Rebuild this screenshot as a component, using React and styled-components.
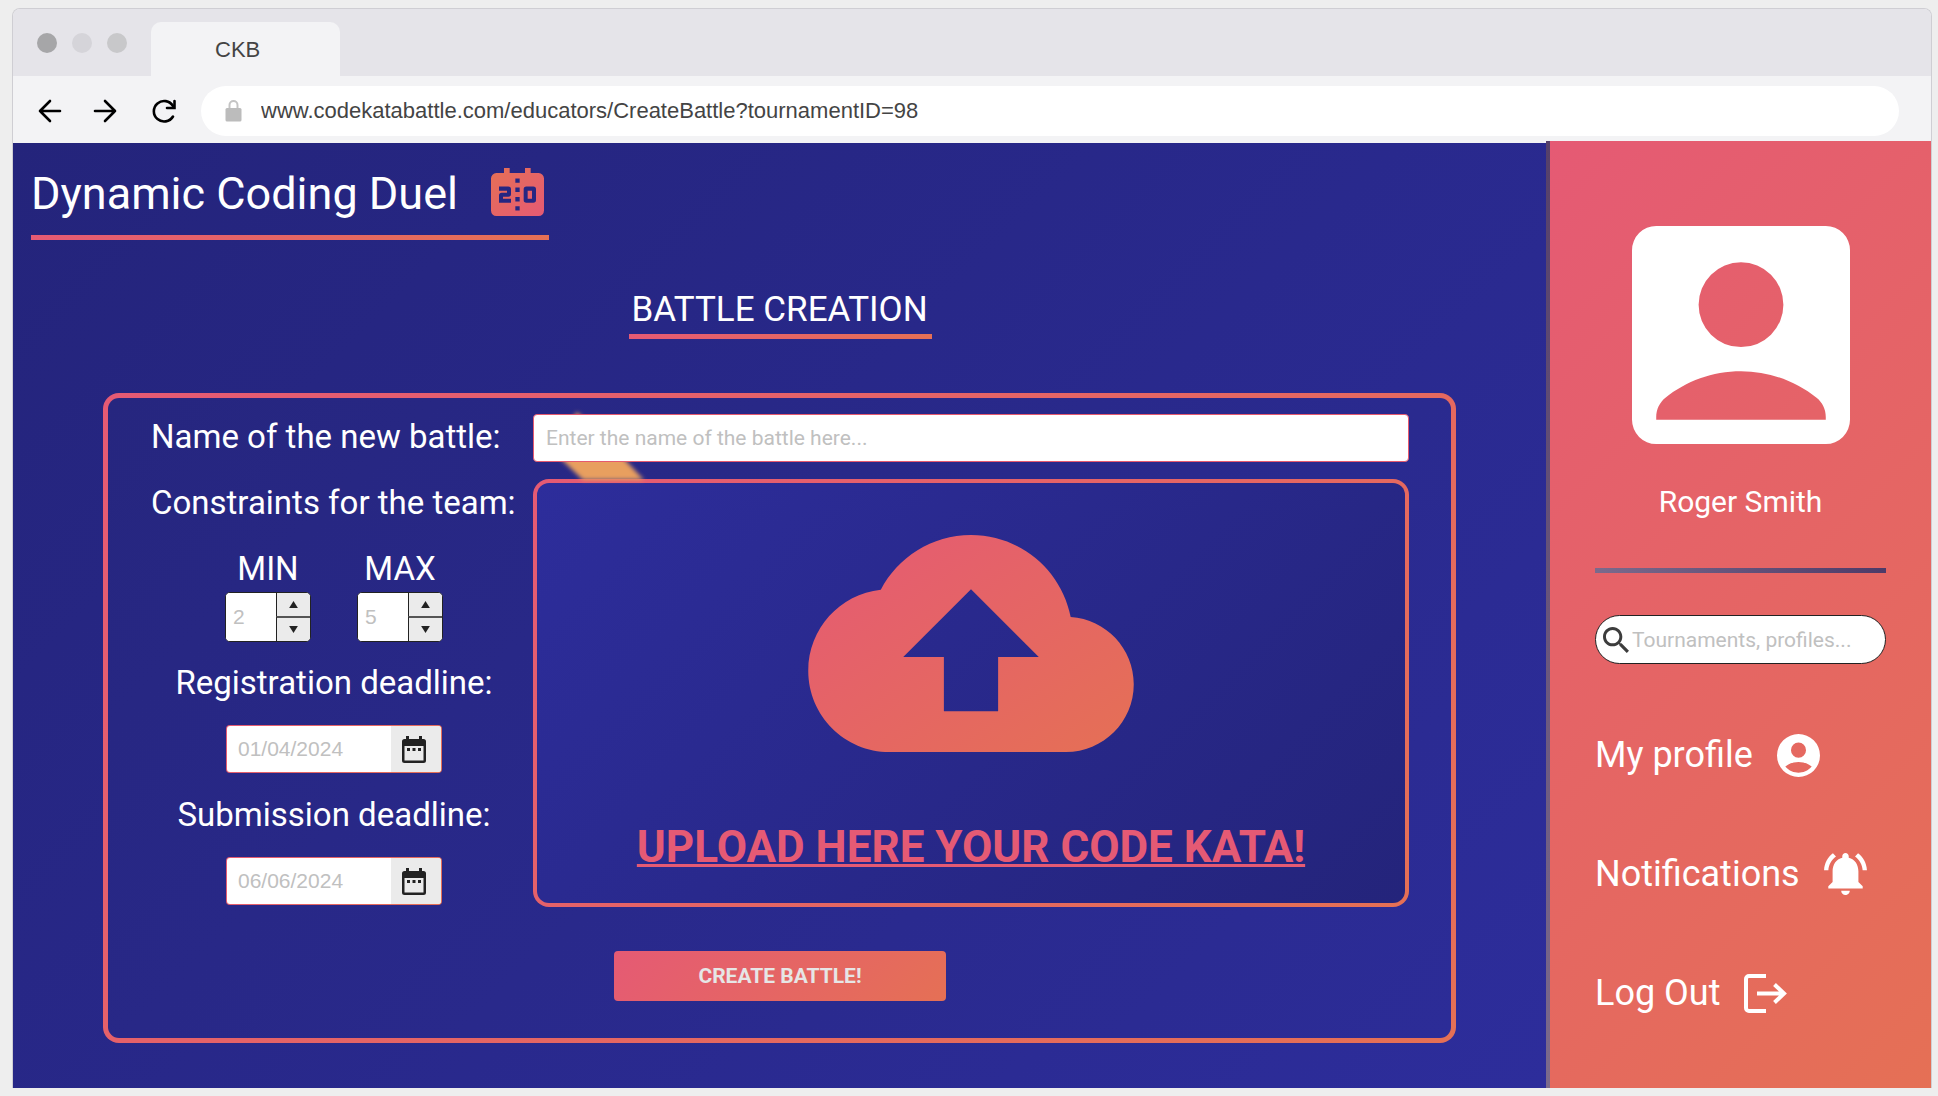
import React, { useState } from "react";
import styled, { createGlobalStyle } from "styled-components";

const roboto = `Roboto, "Liberation Sans", sans-serif`;
const arial = `"Liberation Sans", Arial, sans-serif`;
const warm = "#e55a74, #e57055";
const night = "#24247b, #2d2d9b";

const GlobalStyle = createGlobalStyle`
  *, *::before, *::after { box-sizing: border-box; }
  body { margin: 0; background: #eeeeee; font-family: ${roboto}; color: #fff; }
  button, input { font: inherit; margin: 0; }
  button { cursor: pointer; }
  h1, h2, p { margin: 0; font-weight: 400; }
  svg { display: block; flex: none; }
`;

const Page = styled.div`
  display: flex;
  min-height: 100vh;
  padding: 8px 6px 8px 12px;
`;

const Window = styled.div`
  flex: 1;
  display: flex;
  flex-direction: column;
  border: 1px solid #cfced3;
  border-bottom: 0;
  border-radius: 8px 8px 0 0;
  overflow: hidden;
  background: #f3f3f5;
`;

const TabBar = styled.div`
  display: flex;
  align-items: flex-end;
  height: 67px;
  padding-left: 24px;
  background: #e5e4e9;
`;

const Dots = styled.div`
  display: flex;
  gap: 15px;
  align-self: center;
`;

const Dot = styled.span`
  width: 20px;
  height: 20px;
  border-radius: 50%;
  background: ${(p) => p.$color};
`;

const Tab = styled.div`
  width: 189px;
  height: 54px;
  margin-left: 24px;
  padding-left: 64px;
  border-radius: 10px 10px 0 0;
  background: #f3f3f5;
  color: #444;
  font: 22px/56px ${arial};
`;

const NavBar = styled.div`
  display: flex;
  align-items: center;
  height: 65px;
  padding: 4px 32px 0 23px;
`;

const NavButton = styled.button`
  display: grid;
  place-items: center;
  width: 28px;
  height: 28px;
  margin-right: ${(p) => p.$after}px;
  padding: 0;
  border: 0;
  background: none;
`;

const Address = styled.label`
  flex: 1;
  display: flex;
  align-items: center;
  gap: 19px;
  height: 50px;
  padding-left: 24px;
  border-radius: 25px;
  background: #fff;

  input {
    flex: 1;
    border: 0;
    padding: 0;
    outline: 0;
    background: none;
    color: #444;
    font: 22px/30px ${arial};
  }
`;

const Body = styled.div`
  flex: 1;
  display: flex;
`;

const Main = styled.main`
  flex: 1;
  display: flex;
  flex-direction: column;
  align-items: flex-start;
  padding: 25px 90px 45px 18px;
  border-top: 2px solid #f3f3f5;
  background: linear-gradient(135deg, ${night}) padding-box;
`;

const Underlined = styled.div`
  display: flex;
  align-items: flex-start;
  gap: ${(p) => p.$gap || 0}px;
  padding-left: ${(p) => p.$start || 0}px;
  padding-right: ${(p) => p.$end || 0}px;
  padding-bottom: ${(p) => p.$drop}px;
  border-bottom: 5px solid;
  border-image: linear-gradient(90deg, ${warm}) 1;
`;

const Title = styled.h1`
  font-size: 45px;
  line-height: 52px;
`;

const SectionHead = styled.div`
  align-self: stretch;
  display: flex;
  justify-content: center;
  padding: 48px 0 54px 74px;
`;

const SectionTitle = styled.h2`
  font-size: 35px;
  line-height: 44px;
`;

const Form = styled.form`
  flex: 1;
  align-self: stretch;
  display: grid;
  grid-template-columns: 366px 1fr;
  grid-template-rows: 47px 428px auto;
  column-gap: 16px;
  row-gap: 18px;
  margin-left: 72px;
  padding: 16px 42px 16px 43px;
  border: 5px solid transparent;
  border-radius: 16px;
  background:
    linear-gradient(135deg, #26267f, #2c2c97) padding-box,
    linear-gradient(135deg, ${warm}) border-box;
`;

const Label = styled.label`
  padding-top: 3px;
  font-size: 33px;
  line-height: 40px;
  white-space: nowrap;
`;

const NameField = styled.div`
  position: relative;
`;

const Streak = styled.svg`
  position: absolute;
  left: 14px;
  top: -14px;
`;

const NameInput = styled.input`
  position: relative;
  width: 100%;
  height: 48px;
  padding: 0 12px;
  border: 1px solid #e55a6f;
  border-radius: 4px;
  outline: 0;
  background: #fff;
  font-size: 21px;
  color: #333;
  &::placeholder { color: #c0c0c0; opacity: 1; }
`;

const Side = styled.div`
  display: flex;
  flex-direction: column;
  align-items: center;
`;

const SideHeading = styled.p`
  align-self: flex-start;
  padding-top: 4px;
  font-size: 33px;
  line-height: 40px;
  white-space: nowrap;
`;

const Limits = styled.div`
  display: flex;
  gap: 46px;
  padding: 23px 0 18px;
`;

const Limit = styled.div`
  display: flex;
  flex-direction: column;
  align-items: center;
`;

const Stepper = styled.div`
  display: grid;
  grid-template: 1fr 25px / 1fr 34px;
  width: 86px;
  height: 50px;
  margin-top: 3px;
  border: 1px solid #222;
  border-radius: 5px;
  overflow: hidden;
  background: #fff;

  input {
    grid-row: span 2;
    min-width: 0;
    padding: 0 7px;
    border: 0;
    outline: 0;
    appearance: textfield;
    font: 21px ${arial};
    &::-webkit-inner-spin-button { appearance: none; margin: 0; }
    &::placeholder { color: #c0c0c0; opacity: 1; }
  }

  button {
    display: grid;
    place-items: center;
    padding: 0;
    border: 0;
    border-left: 1px solid #222;
    background: #ebebeb;
  }

  button + button { border-top: 2px solid #555; }
`;

const DateGroup = styled.div`
  display: flex;
  flex-direction: column;
  align-items: center;
  gap: 22px;
  padding-bottom: 19px;
`;

const DateBox = styled.div`
  display: flex;
  width: 216px;
  height: 48px;
  border: 1px solid transparent;
  border-radius: 4px;
  background:
    linear-gradient(#fff, #fff) padding-box,
    linear-gradient(135deg, ${warm}) border-box;

  input {
    flex: 1;
    min-width: 0;
    padding: 0 11px;
    border: 0;
    outline: 0;
    background: none;
    font: 21px ${arial};
    &::placeholder { color: #c0c0c0; opacity: 1; }
  }

  button {
    display: grid;
    place-items: center;
    width: 50px;
    padding: 0 4px 0 0;
    border: 0;
    border-radius: 0 3px 3px 0;
    background: #ebebeb;
  }
`;

const Upload = styled.div`
  display: flex;
  flex-direction: column;
  align-items: center;
  padding-top: 52px;
  border: 4px solid transparent;
  border-radius: 16px;
  background:
    linear-gradient(135deg, #2d2d9b, #24247b) padding-box,
    linear-gradient(135deg, ${warm}) border-box;
`;

const UploadLink = styled.a`
  margin-top: 69px;
  color: #e55a74;
  font-size: 44px;
  line-height: 52px;
  font-weight: 700;
  text-decoration: underline;
  text-decoration-thickness: 3px;
  text-underline-offset: 2px;
  text-decoration-skip-ink: none;
`;

const Submit = styled.button`
  grid-column: 1 / -1;
  justify-self: center;
  width: 332px;
  height: 50px;
  margin-top: 26px;
  border: 0;
  border-radius: 4px;
  background: linear-gradient(135deg, ${warm});
  color: #e6e6e6;
  font-size: 21px;
  font-weight: 700;
`;

const Sidebar = styled.aside`
  display: flex;
  flex-direction: column;
  flex: none;
  width: 385px;
  padding: 85px 45px 0;
  border-left: 4px solid;
  border-image: linear-gradient(#55406a, #7b6a8c) 1;
  background: linear-gradient(135deg, ${warm});
`;

const Person = styled.div`
  display: flex;
  flex-direction: column;
  align-items: center;
  gap: 40px;
  font-size: 30px;
  line-height: 36px;
`;

const Rule = styled.hr`
  width: 100%;
  height: 5px;
  margin: 48px 0 42px;
  border: 0;
  background: linear-gradient(90deg, #7b6a8c, #4d3a68);
`;

const Search = styled.label`
  display: flex;
  align-items: center;
  gap: 3px;
  height: 49px;
  padding-left: 7px;
  border: 1px solid #222;
  border-radius: 25px;
  background: #fff;

  input {
    flex: 1;
    min-width: 0;
    padding: 0;
    border: 0;
    outline: 0;
    background: none;
    font-size: 21px;
    &::placeholder { color: #c0c0c0; opacity: 1; }
  }
`;

const Menu = styled.nav`
  display: flex;
  flex-direction: column;
  align-items: flex-start;
  gap: 75px;
  padding-top: 69px;
`;

const MenuLink = styled.a`
  display: flex;
  align-items: center;
  gap: 24px;
  color: #fff;
  font-size: 36px;
  line-height: 44px;
  text-decoration: none;
`;

const BackIcon = ({ flip }) => (
  <svg width="24" height="24" viewBox="0 0 24 24" fill="none" stroke="#000" strokeWidth="2.6" strokeLinecap="round" strokeLinejoin="round">
    <path d={flip ? "M2 12h20M12 2l10 10-10 10" : "M22 12H2M12 2L2 12l10 10"} />
  </svg>
);

const ReloadIcon = () => (
  <svg width="26" height="26" viewBox="0 0 26 26" fill="none" stroke="#000" strokeWidth="2.6" strokeLinecap="round">
    <path d="M22 8A10.300 10.300 0 1 0 22 18.500" />
    <path d="M23.500 3v7H16" />
  </svg>
);

const LockIcon = () => (
  <svg width="17" height="22" viewBox="0 0 17 22">
    <path d="M4.500 9V5a4 4 0 0 1 8 0v4" fill="none" stroke="#c4c4c4" strokeWidth="2" />
    <rect x="0.500" y="8" width="16" height="13.500" rx="1.500" fill="#bcbcbc" />
  </svg>
);

const ScoreIcon = () => (
  <svg width="53" height="48" viewBox="0 0 159 142" preserveAspectRatio="none" aria-hidden="true">
    <defs>
      <linearGradient id="score" x1="0" y1="0" x2="1" y2="1">
        <stop offset="0" stopColor="#e57055" />
        <stop offset="1" stopColor="#e55a74" />
      </linearGradient>
    </defs>
    <path
      fill="url(#score)"
      fillRule="evenodd"
      d="M39 0h17v15h46V0h17v15h24a16 16 0 0 1 16 16v95a16 16 0 0 1-16 16H16a16 16 0 0 1-16-16V31a16 16 0 0 1 16-16h23z
         M73 31v13h13V31zM73 58v13h13V58zM73 86v13h13V86zM73 113v13h13V113z
         M24 55v12h24v6H32a8 8 0 0 0-8 8v22h36V91H36v-6h16a8 8 0 0 0 8-8V63a8 8 0 0 0-8-8z
         M106 55a8 8 0 0 0-8 8v32a8 8 0 0 0 8 8h21a8 8 0 0 0 8-8V63a8 8 0 0 0-8-8zM110 67h13v24h-13z"
    />
  </svg>
);

const CloudIcon = () => (
  <svg width="326" height="217" viewBox="0 4 24 16" aria-hidden="true">
    <defs>
      <linearGradient id="cloud" x1="0" y1="0" x2="1" y2="1">
        <stop offset="0" stopColor="#e55a74" />
        <stop offset="1" stopColor="#e57055" />
      </linearGradient>
    </defs>
    <path fill="url(#cloud)" d="M19.350 10.040C18.670 6.590 15.640 4 12 4 9.110 4 6.600 5.640 5.350 8.040 2.340 8.360 0 10.910 0 14c0 3.310 2.690 6 6 6h13c2.760 0 5-2.240 5-5 0-2.640-2.050-4.780-4.650-4.960zM14 13v4h-4v-4H7l5-5 5 5h-3z" />
  </svg>
);

const CalendarIcon = () => (
  <svg width="24" height="27" viewBox="0 0 24 27" aria-hidden="true">
    <path fill="#222" fillRule="evenodd" d="M4 0h3v3h10V0h3v3h1.500A2.500 2.500 0 0 1 24 5.500v19a2.500 2.500 0 0 1-2.500 2.500h-19A2.500 2.500 0 0 1 0 24.500v-19A2.500 2.500 0 0 1 2.500 3H4zM2.500 10v14.500h19V10z" />
    <path fill="#222" d="M5 12h3v3H5zM10.500 12h3v3h-3zM16 12h3v3h-3z" />
  </svg>
);

const AvatarIcon = () => (
  <svg width="218" height="218" viewBox="3 3 18 18" fill="#fff" aria-hidden="true">
    <path fillRule="evenodd" d="M5 3h14a2 2 0 0 1 2 2v14a2 2 0 0 1-2 2H5a2 2 0 0 1-2-2V5a2 2 0 0 1 2-2zM12 6a3.500 3.500 0 1 0 0 7 3.500 3.500 0 0 0 0-7zM5 19h14v-.23c0-.62-.28-1.200-.76-1.580C16.540 15.820 14.370 15 12 15s-4.540.82-6.240 2.190c-.48.38-.76.970-.76 1.580z" />
  </svg>
);

const SearchIcon = () => (
  <svg width="26" height="26" viewBox="3 3 17.500 17.500" fill="#3c3c3c" aria-hidden="true">
    <path d="M15.500 14h-.79l-.28-.27C15.410 12.590 16 11.110 16 9.500 16 5.910 13.090 3 9.500 3S3 5.910 3 9.500 5.910 16 9.500 16c1.610 0 3.090-.59 4.230-1.570l.27.28v.79l5 4.990L20.490 19l-4.990-5zm-6 0C7.010 14 5 11.990 5 9.500S7.010 5 9.500 5 14 7.010 14 9.500 11.990 14 9.500 14z" />
  </svg>
);

const ProfileIcon = () => (
  <svg width="43" height="43" viewBox="2 2 20 20" fill="#fff" aria-hidden="true">
    <path fillRule="evenodd" d="M12 2a10 10 0 1 0 0 20 10 10 0 0 0 0-20zM12 6a3.500 3.500 0 1 1 0 7 3.500 3.500 0 0 1 0-7zM12 20c-2.030 0-4.430-.82-6.140-2.880a9.947 9.947 0 0 1 12.280 0C16.430 19.180 14.030 20 12 20z" />
  </svg>
);

const BellIcon = () => (
  <svg width="43" height="42" viewBox="2 2.500 20 19.500" fill="#fff" aria-hidden="true">
    <path d="M7.580 4.080L6.150 2.650C3.750 4.480 2.170 7.300 2.030 10.500h2c.15-2.650 1.510-4.970 3.550-6.420zm12.390 6.420h2c-.15-3.200-1.730-6.020-4.120-7.850l-1.420 1.430c2.020 1.450 3.390 3.770 3.540 6.420zM18 11c0-3.070-1.640-5.640-4.500-6.320V4c0-.83-.67-1.500-1.500-1.500s-1.500.67-1.500 1.500v.68C7.630 5.360 6 7.920 6 11v5l-2 2v1h16v-1l-2-2v-5zm-6 11c.14 0 .27-.01.4-.04.65-.14 1.180-.58 1.440-1.180.1-.24.15-.5.15-.78h-4c.01 1.100.9 2 2.010 2z" />
  </svg>
);

const ExitIcon = () => (
  <svg width="43" height="39" viewBox="0 0 43 39" fill="none" stroke="#fff" strokeWidth="4" aria-hidden="true">
    <path d="M22 2H5a3 3 0 0 0-3 3v29a3 3 0 0 0 3 3h17M13 19.500h26M30.500 10.500l9.500 9-9.500 9" />
  </svg>
);

const Caret = ({ down }) => (
  <svg width="9" height="7" viewBox="0 0 10 8" fill="#222" aria-hidden="true">
    <path d={down ? "M0 0h10L5 8z" : "M0 8h10L5 0z"} />
  </svg>
);

function LimitField({ id, label, hint }) {
  const [value, setValue] = useState("");
  const step = (by) => setValue(String(Math.max(1, Number(value || hint) + by)));
  return (
    <Limit>
      <Label htmlFor={id}>{label}</Label>
      <Stepper>
        <input id={id} type="number" placeholder={hint} value={value} onChange={(e) => setValue(e.target.value)} />
        <button type="button" aria-label={`Increase ${label}`} onClick={() => step(1)}><Caret /></button>
        <button type="button" aria-label={`Decrease ${label}`} onClick={() => step(-1)}><Caret down /></button>
      </Stepper>
    </Limit>
  );
}

function DateField({ id, label, hint }) {
  return (
    <DateGroup>
      <Label htmlFor={id}>{label}</Label>
      <DateBox>
        <input id={id} placeholder={hint} />
        <button type="button" aria-label="Open calendar"><CalendarIcon /></button>
      </DateBox>
    </DateGroup>
  );
}

export default function App() {
  return (
    <>
      <GlobalStyle />
      <Page>
        <Window>
          <TabBar>
            <Dots>
              <Dot $color="#a6a6a8" />
              <Dot $color="#d5d4d9" />
              <Dot $color="#c8c8ca" />
            </Dots>
            <Tab>CKB</Tab>
          </TabBar>
          <NavBar>
            <NavButton $after={27} aria-label="Back"><BackIcon /></NavButton>
            <NavButton $after={31} aria-label="Forward"><BackIcon flip /></NavButton>
            <NavButton $after={23} aria-label="Reload"><ReloadIcon /></NavButton>
            <Address>
              <LockIcon />
              <input aria-label="Address" defaultValue="www.codekatabattle.com/educators/CreateBattle?tournamentID=98" />
            </Address>
          </NavBar>
          <Body>
            <Main>
              <Underlined $gap={33} $end={5} $drop={15}>
                <Title>Dynamic Coding Duel</Title>
                <ScoreIcon />
              </Underlined>
              <SectionHead>
                <Underlined $start={2} $end={4} $drop={2}>
                  <SectionTitle>BATTLE CREATION</SectionTitle>
                </Underlined>
              </SectionHead>
              <Form onSubmit={(e) => e.preventDefault()}>
                <Label htmlFor="battle-name">Name of the new battle:</Label>
                <NameField>
                  <Streak width="110" height="90" viewBox="0 0 110 90" aria-hidden="true">
                    <defs>
                      <filter id="soft"><feGaussianBlur stdDeviation="2" /></filter>
                    </defs>
                    <path d="M30 12L80 62l17 18H36L15 60 5 48z" fill="#e89f5f" filter="url(#soft)" />
                  </Streak>
                  <NameInput id="battle-name" placeholder="Enter the name of the battle here..." />
                </NameField>
                <Side>
                  <SideHeading>Constraints for the team:</SideHeading>
                  <Limits>
                    <LimitField id="team-min" label="MIN" hint="2" />
                    <LimitField id="team-max" label="MAX" hint="5" />
                  </Limits>
                  <DateField id="registration" label="Registration deadline:" hint="01/04/2024" />
                  <DateField id="submission" label="Submission deadline:" hint="06/06/2024" />
                </Side>
                <Upload>
                  <CloudIcon />
                  <UploadLink href="#upload">UPLOAD HERE YOUR CODE KATA!</UploadLink>
                </Upload>
                <Submit type="submit">CREATE BATTLE!</Submit>
              </Form>
            </Main>
            <Sidebar>
              <Person>
                <AvatarIcon />
                <p>Roger Smith</p>
              </Person>
              <Rule />
              <Search>
                <SearchIcon />
                <input type="search" aria-label="Search" placeholder="Tournaments, profiles..." />
              </Search>
              <Menu>
                <MenuLink href="#profile">My profile <ProfileIcon /></MenuLink>
                <MenuLink href="#notifications">Notifications <BellIcon /></MenuLink>
                <MenuLink href="#logout">Log Out <ExitIcon /></MenuLink>
              </Menu>
            </Sidebar>
          </Body>
        </Window>
      </Page>
    </>
  );
}
